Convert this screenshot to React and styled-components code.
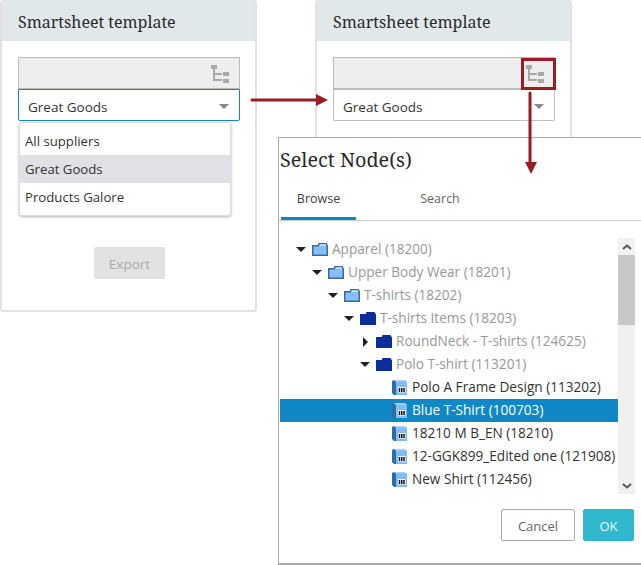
import React from "react";
import styled, {createGlobalStyle} from "styled-components";

const GlobalStyle = createGlobalStyle`
  html, body {
    margin: 0;
    padding: 0;
    background: #fff;
  }
  body {
    font-family: "Open Sans", "Noto Sans", sans-serif;
  }
`

const Page = styled.div`
  position: relative;
  width: 641px;
  height: 565px;
  overflow: hidden;
  display: flex;
  align-items: flex-start;
  gap: 58px;
`

const Panel = styled.section`
  width: 257px;
  height: 312px;
  box-sizing: border-box;
  border: 2px solid #e2e2e2;
  border-top: none;
  border-radius: 3px;
`

const PanelHeader = styled.header`
  height: 41px;
  margin: 0 0 16px;
  padding-left: 16px;
  background: #e0e8ea;
  font-family: "Noto Serif", "DejaVu Serif", serif;
  font-size: 16px;
  font-weight: 400;
  line-height: 44px;
  color: #2a2a2a;
`

const FieldGroup = styled.div`
  position: relative;
  margin: 0 15px 0 16px;
`

const PathField = styled.div`
  height: 32px;
  box-sizing: border-box;
  display: flex;
  justify-content: flex-end;
  align-items: center;
  padding: 0 10px 0 0;
  background: #eee;
  border: 1px solid #bbb;
`

const Select = styled.div`
  height: 32px;
  box-sizing: border-box;
  display: flex;
  justify-content: space-between;
  align-items: center;
  padding: 3px 9px 0;
  background: #fff;
  border: 1px solid ${props => props.$open ? '#1088c8' : '#c0c0c0'};
  border-top-color: ${props => props.$open ? '#1088c8' : '#bbb'};
  border-radius: 0 0 2px 2px;
  font-size: 13.5px;
  color: #333;
`

const SelectArrow = styled.span`
  width: 0;
  height: 0;
  margin: 0 1px 0 0;
  border-left: 5px solid transparent;
  border-right: 5px solid transparent;
  border-top: 5px solid #888;
`

const Menu = styled.ul`
  position: absolute;
  left: 1px;
  top: 65px;
  width: 212px;
  box-sizing: border-box;
  margin: 0;
  padding: 4px 0;
  list-style: none;
  background: #fff;
  border: 1px solid #ddd;
  border-radius: 3px;
  box-shadow: 0 1px 3px rgba(0, 0, 0, 0.3);
`

const MenuItem = styled.li`
  height: 28px;
  padding-left: 5px;
  line-height: 28px;
  font-size: 13.2px;
  color: #333;
  background: ${props => props.$active ? '#e0e0e5' : 'transparent'};
`

const ExportButton = styled.button`
  display: block;
  width: 71px;
  height: 32px;
  margin: 126px 0 0 92px;
  padding: 2px 0 0;
  border: none;
  border-radius: 2px;
  background: #e2e2e2;
  color: #aaa;
  font-family: inherit;
  font-size: 13.5px;
`

const Dialog = styled.div`
  position: absolute;
  left: 278px;
  top: 137px;
  width: 363px;
  height: 428px;
  box-sizing: border-box;
  display: flex;
  flex-direction: column;
  background: #fff;
  border: 1px solid #aaa;
  border-right: none;
  border-bottom-width: 2px;
`

const DialogTitle = styled.h2`
  margin: 0;
  height: 44px;
  padding-left: 1px;
  font-family: "Noto Serif", "DejaVu Serif", serif;
  font-size: 19.8px;
  font-weight: 400;
  line-height: 43px;
  color: #2a2a2a;
`

const Tabs = styled.div`
  height: 38px;
  display: flex;
  border-bottom: 1px solid #ccc;
`

const Tab = styled.div`
  width: ${props => props.$wide ? '168px' : '75px'};
  height: 38px;
  box-sizing: border-box;
  margin-left: ${props => props.$wide ? '0' : '2px'};
  text-align: center;
  line-height: 33px;
  font-size: 12.5px;
  color: ${props => props.$active ? '#444' : '#666'};
  border-bottom: ${props => props.$active ? '3px solid #1088c8' : 'none'};
`

const Browser = styled.div`
  display: flex;
  height: 256px;
  margin: 17px 6px 0 1px;
`

const Tree = styled.div`
  flex: 1;
  min-width: 0;
`

const Row = styled.div`
  height: 23px;
  display: flex;
  align-items: center;
  padding-left: ${props => 16 + props.$level * 16}px;
  font-size: 13.6px;
  white-space: nowrap;
  color: ${props => props.$selected ? '#fff' : props.$muted ? '#999' : '#333'};
  background: ${props => props.$selected ? '#1088c8' : 'transparent'};
`

const Caret = styled.span`
  width: 16px;
  flex: none;
  display: flex;
  align-items: center;
  &::before {
    content: "";
    width: 0;
    height: 0;
    ${props => props.$closed ? `
      margin-left: 3px;
      border-top: 5px solid transparent;
      border-bottom: 5px solid transparent;
      border-left: 5px solid #222;
    ` : `
      border-left: 5px solid transparent;
      border-right: 5px solid transparent;
      border-top: 5px solid #222;
    `}
  }
`

const CaretSpacer = styled.span`
  width: 16px;
  flex: none;
`

const Label = styled.span`
  margin-left: ${props => props.$leaf ? '5px' : '4px'};
  padding-bottom: 2px;
`

const Scrollbar = styled.div`
  width: 17px;
  flex: none;
  display: flex;
  flex-direction: column;
  align-items: center;
  background: #f0f0f0;
`

const ScrollArrow = styled.div`
  height: 17px;
  display: flex;
  align-items: center;
`

const ScrollThumb = styled.div`
  width: 100%;
  height: 70px;
  background: #c8c8c8;
`

const ScrollTrack = styled.div`
  flex: 1;
`

const Footer = styled.div`
  display: flex;
  justify-content: flex-end;
  gap: 8px;
  margin: 15px 7px 0 0;
`

const CancelButton = styled.button`
  width: 74px;
  height: 32px;
  padding: 2px 0 0;
  background: #fff;
  border: 1px solid #aaa;
  border-radius: 2px;
  font-family: inherit;
  font-size: 13px;
  color: #666;
`

const OkButton = styled(CancelButton)`
  width: 51px;
  background: #30b8cc;
  border-color: #30b8cc;
  color: #e8f8fa;
`

const Callout = styled.div`
  position: absolute;
  left: 521px;
  top: 58px;
  width: 35px;
  height: 32px;
  box-sizing: border-box;
  border: 3px solid #9b1c23;
`

const ArrowLayer = styled.svg`
  position: absolute;
  left: 0;
  top: 0;
  pointer-events: none;
`

function HierarchyIcon() {
	return (
		<svg width="19" height="19" viewBox="0 0 19 19">
			<rect x="1" y="1" width="6" height="4" fill="#a8a8a8"/>
			<path d="M4 5V16H12M4 10H12" fill="none" stroke="#a8a8a8" strokeWidth="2"/>
			<rect x="13" y="8" width="6" height="4" fill="#a8a8a8"/>
			<rect x="13" y="15" width="6" height="4" fill="#a8a8a8"/>
		</svg>
	)
}

function FolderIcon({dark}) {
	const fill = dark ? '#0a2f98' : '#84bffc'
	const line = dark ? '#0a2f98' : '#3a6a9c'
	return (
		<svg width="16" height="13" viewBox="0 0 16 13" style={{flex: 'none'}}>
			<path d="M0.75 2.75H6.5L7 0.75H14L15.25 2.75V12.25H0.75Z" fill={fill} stroke={line} strokeWidth="1.5"/>
			<path d="M7.5 2H14" stroke={dark ? '#0a2f98' : '#fff'}/>
		</svg>
	)
}

function ItemIcon() {
	return (
		<svg width="15" height="15" viewBox="0 0 15 15" style={{flex: 'none'}}>
			<path d="M0 1L2 0H4V15H2L0 13Z" fill="#2f6ca6"/>
			<path d="M2 0H13L15 2H4Z" fill="#a8d2fc"/>
			<rect x="4" y="1.5" width="11" height="13.5" fill="#80bcfa"/>
			<rect x="6" y="7" width="7.5" height="5.5" fill="#fff"/>
			<path d="M7.5 8V12M9.75 8V12M12 8V12" stroke="#111" strokeWidth="1.5"/>
		</svg>
	)
}

function TemplatePanel({open}) {
	return (
		<Panel>
			<PanelHeader>Smartsheet template</PanelHeader>
			<FieldGroup>
				<PathField><HierarchyIcon/></PathField>
				<Select $open={open}>Great Goods<SelectArrow/></Select>
				{open && (
					<Menu>
						<MenuItem>All suppliers</MenuItem>
						<MenuItem $active>Great Goods</MenuItem>
						<MenuItem>Products Galore</MenuItem>
					</Menu>
				)}
			</FieldGroup>
			{open && <ExportButton disabled>Export</ExportButton>}
		</Panel>
	)
}

const nodes = [
	{level: 0, text: 'Apparel (18200)'},
	{level: 1, text: 'Upper Body Wear (18201)'},
	{level: 2, text: 'T-shirts (18202)'},
	{level: 3, text: 'T-shirts Items (18203)', dark: true},
	{level: 4, text: 'RoundNeck - T-shirts (124625)', dark: true, closed: true},
	{level: 4, text: 'Polo T-shirt (113201)', dark: true},
	{level: 5, text: 'Polo A Frame Design (113202)', leaf: true},
	{level: 5, text: 'Blue T-Shirt (100703)', leaf: true, selected: true},
	{level: 5, text: '18210 M B_EN (18210)', leaf: true},
	{level: 5, text: '12-GGK899_Edited one (121908)', leaf: true},
	{level: 5, text: 'New Shirt (112456)', leaf: true},
]

function TreeRow({node}) {
	if (node.leaf) {
		return (
			<Row $level={node.level} $selected={node.selected}>
				<CaretSpacer/>
				<ItemIcon/>
				<Label $leaf>{node.text}</Label>
			</Row>
		)
	}
	return (
		<Row $level={node.level} $muted>
			<Caret $closed={node.closed}/>
			<FolderIcon dark={node.dark}/>
			<Label>{node.text}</Label>
		</Row>
	)
}

function App() {
	return (
		<Page>
			<GlobalStyle/>
			<TemplatePanel open/>
			<TemplatePanel/>
			<Callout/>
			<ArrowLayer width="641" height="565">
				<path d="M252 100H318" stroke="#9b1c23" strokeWidth="3" strokeLinecap="round"/>
				<path d="M316 94L328 100L316 106Z" fill="#9b1c23"/>
			</ArrowLayer>
			<Dialog>
				<DialogTitle>Select Node(s)</DialogTitle>
				<Tabs>
					<Tab $active>Browse</Tab>
					<Tab $wide>Search</Tab>
				</Tabs>
				<Browser>
					<Tree>
						{nodes.map(node => <TreeRow node={node} key={node.text}/>)}
					</Tree>
					<Scrollbar>
						<ScrollArrow>
							<svg width="10" height="6" viewBox="0 0 10 6"><path d="M1 5L5 1.5L9 5" fill="none" stroke="#555" strokeWidth="2"/></svg>
						</ScrollArrow>
						<ScrollThumb/>
						<ScrollTrack/>
						<ScrollArrow>
							<svg width="10" height="6" viewBox="0 0 10 6"><path d="M1 1L5 4.5L9 1" fill="none" stroke="#555" strokeWidth="2"/></svg>
						</ScrollArrow>
					</Scrollbar>
				</Browser>
				<Footer>
					<CancelButton>Cancel</CancelButton>
					<OkButton>OK</OkButton>
				</Footer>
			</Dialog>
			<ArrowLayer width="641" height="565">
				<path d="M530 93V163" stroke="#9b1c23" strokeWidth="3" strokeLinecap="round"/>
				<path d="M525 162H537L531 174Z" fill="#9b1c23"/>
			</ArrowLayer>
		</Page>
	);
}

export default App;
